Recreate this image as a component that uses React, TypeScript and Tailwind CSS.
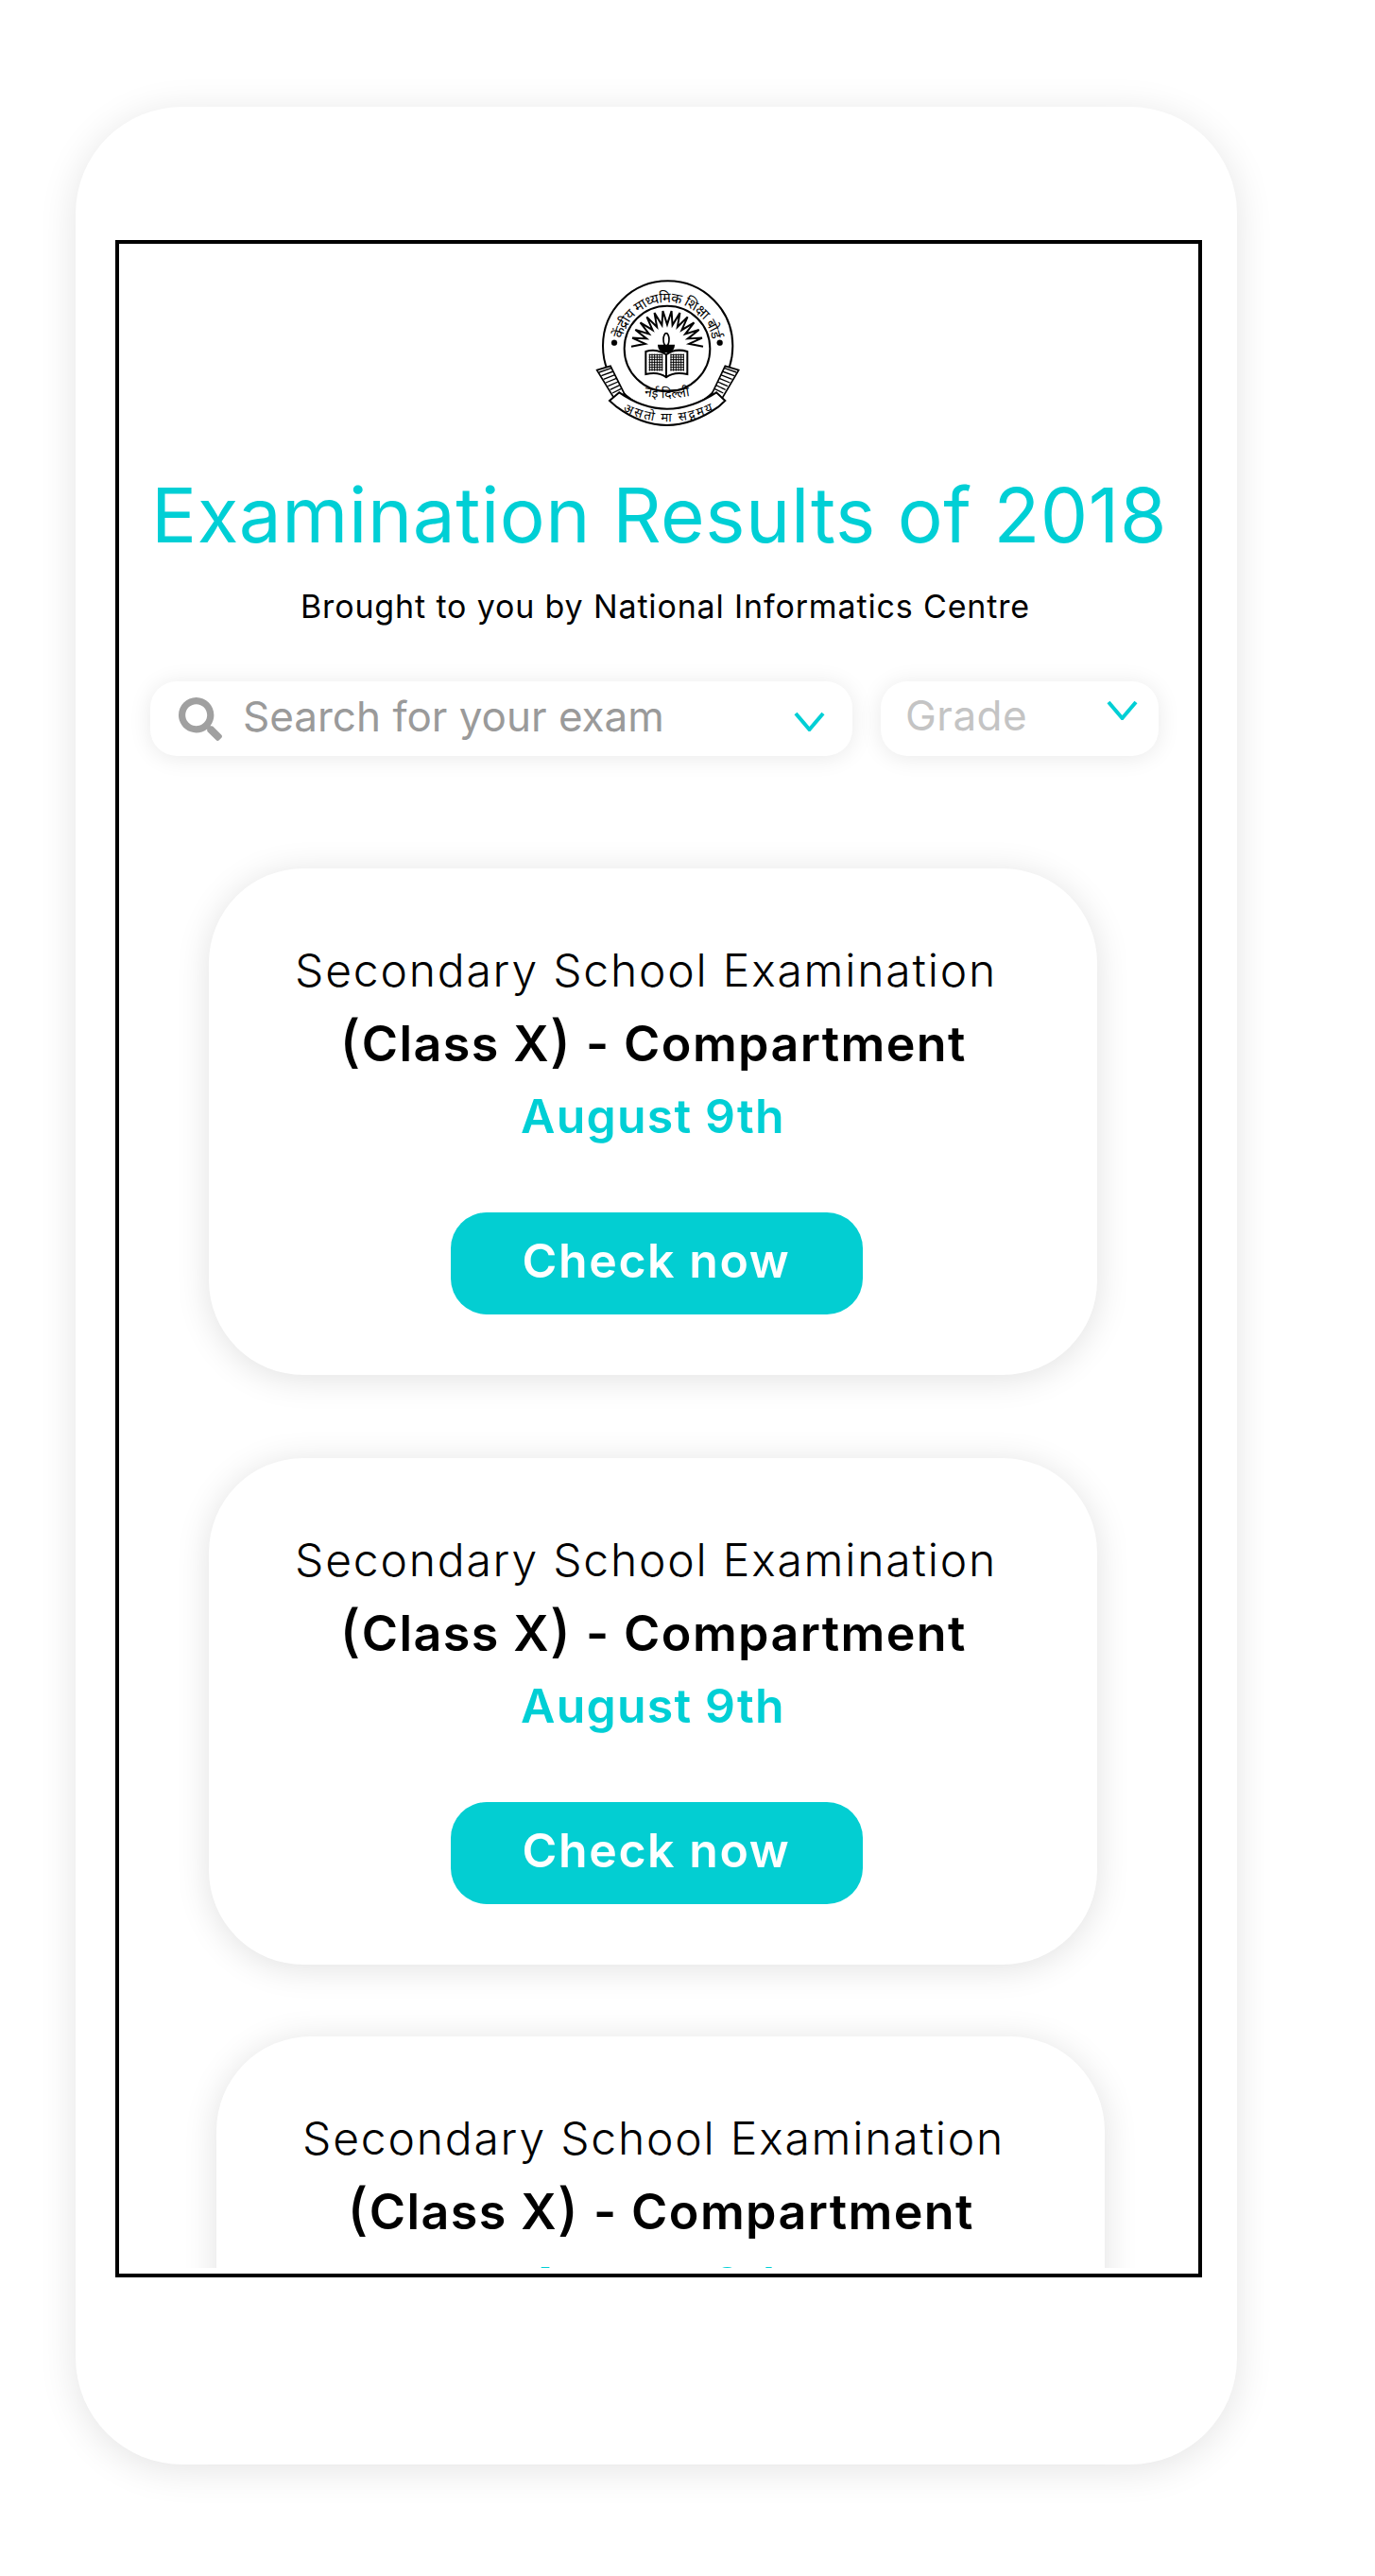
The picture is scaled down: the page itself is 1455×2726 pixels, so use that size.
import { FaSearch } from "react-icons/fa";

const font = { fontFamily: "Inter, 'Noto Sans', sans-serif" };

// sun rays behind the lamp, alternating long and short points
const rays = Array.from({ length: 27 }, (_, i) => {
  const a = Math.PI + (i / 26) * Math.PI;
  const r = i % 2 === 0 ? 114 : 70;
  return `${348 + Math.cos(a) * r},${290 + Math.sin(a) * r}`;
}).join(" ");

function Seal() {
  return (
    <svg viewBox="0 0 720 600" className="h-[200px] w-[240px]" fill="none" stroke="#000">
      <defs>
        <path id="seal-top" d="M202 296 A146 146 0 0 1 494 296" />
        <path id="seal-banner" d="M190 486 Q345 572 512 486" />
        <path id="seal-city" d="M250 440 Q345 468 445 440" />
      </defs>
      <circle cx="350" cy="288" r="206" strokeWidth="6" fill="#fff" />
      <circle cx="348" cy="297" r="136" strokeWidth="6" />
      <circle cx="180" cy="278" r="9" fill="#000" />
      <circle cx="515" cy="278" r="9" fill="#000" />
      <text fontSize="44" fill="#000" stroke="none" fontFamily="'Noto Sans', sans-serif">
        <textPath href="#seal-top" startOffset="50%" textAnchor="middle" textLength="400" lengthAdjust="spacing">
          केंद्रीय माध्यमिक शिक्षा बोर्ड
        </textPath>
      </text>
      <polyline points={rays} strokeWidth="6" />
      <ellipse cx="345" cy="268" rx="9" ry="20" strokeWidth="5" fill="#fff" />
      <path d="M318 284 H372 C372 304 356 310 345 310 C334 310 318 304 318 284Z" fill="#000" stroke="none" />
      <path d="M280 306 C305 298 330 304 345 316 C360 304 385 298 412 306 V378 C385 372 360 376 345 388 C330 376 305 372 280 378Z" strokeWidth="6" fill="#fff" />
      <path d="M345 316 V388" strokeWidth="6" />
      <g strokeWidth="3">
        {[0, 1, 2, 3, 4, 5].map((i) => (
          <path key={i} d={`M${292 + i * 8} 314 V368 M${360 + i * 8} 314 V368`} />
        ))}
        {[0, 1, 2, 3, 4, 5, 6].map((i) => (
          <path key={i} d={`M290 ${316 + i * 8} H334 M358 ${316 + i * 8} H402`} />
        ))}
      </g>
      <path d="M125 365 L168 352 L212 440 L180 455Z M575 365 L532 352 L490 440 L522 455Z" strokeWidth="5" fill="#fff" />
      <g strokeWidth="4">
        {[0, 1, 2, 3, 4, 5, 6].map((i) => (
          <path key={i} d={`M${132 + i * 7} ${372 + i * 11} L${172 + i * 5} ${358 + i * 11} M${568 - i * 7} ${372 + i * 11} L${528 - i * 5} ${358 + i * 11}`} />
        ))}
      </g>
      <path d="M165 462 L196 436 Q345 540 504 436 L532 462 L510 482 Q345 598 188 482Z" strokeWidth="6" fill="#fff" />
      <text fontSize="40" fill="#000" stroke="none" fontFamily="'Noto Sans', sans-serif">
        <textPath href="#seal-banner" startOffset="50%" textAnchor="middle" textLength="300" lengthAdjust="spacing">
          असतो मा सद्गमय
        </textPath>
      </text>
      <text fontSize="42" fill="#000" stroke="none" fontFamily="'Noto Sans', sans-serif">
        <textPath href="#seal-city" startOffset="50%" textAnchor="middle">नई दिल्ली</textPath>
      </text>
    </svg>
  );
}

function Chevron() {
  return (
    <svg viewBox="0 0 33 21" className="h-[21px] w-[33px]" fill="none" stroke="#00cfd5" strokeWidth="4">
      <path d="M2 2 L16.5 19 L31 2" />
    </svg>
  );
}

function ExamCard({ className }: { className: string }) {
  return (
    <div className={`flex h-[536px] w-[940px] flex-col items-center rounded-[100px] bg-white pt-[79px] shadow-[0_4px_36px_rgba(0,0,0,0.12)] ${className}`}>
      <p className="mr-[15px] text-[48px] leading-[58px] font-light tracking-[1.8px] whitespace-nowrap text-black">
        Secondary School Examination
      </p>
      <p className="mt-[15px] h-[60px] text-[52px] leading-[60px] font-semibold tracking-[1.4px] whitespace-nowrap text-black">
        <span className="text-[60px] leading-none font-medium">(</span>Class X
        <span className="text-[60px] leading-none font-medium">)</span> - Compartment
      </p>
      <p className="mt-[21px] text-[50px] leading-[58px] font-semibold tracking-[1.2px] whitespace-nowrap text-[#00cfd5]">
        August 9th
      </p>
      <button className="mt-[73px] ml-[7px] h-[108px] w-[436px] rounded-[38px] bg-[#03ced2] pb-[6px] text-[50px] font-semibold tracking-[1.6px] text-white">
        Check now
      </button>
    </div>
  );
}

export default function App() {
  return (
    <div className="h-[2726px] w-full bg-white pt-[113px] pl-[80px]" style={font}>
      <div className="h-[2495px] w-[1229px] rounded-[113px] bg-white pt-[141px] pl-[42px] shadow-[0_6px_40px_rgba(0,0,0,0.11)]">
        <div className="h-[2156px] w-[1150px] border-4 border-black">
          <div className="h-[2142px] overflow-hidden">
            <div className="mt-[12px] ml-[464px] w-[240px]">
              <Seal />
            </div>
            <h1 className="mt-[33px] ml-[34px] text-[80px] leading-[84px] font-normal tracking-[0.55px] whitespace-nowrap text-[#00cfd5]">
              Examination Results of 2018
            </h1>
            <p className="mt-[33px] ml-[192px] text-[34px] leading-[44px] tracking-[0.85px] whitespace-nowrap text-black">
              Brought to you by National Informatics Centre
            </p>
            <div className="mt-[57px] ml-[33px] flex gap-[30px]">
              <div className="flex h-[79px] w-[743px] items-center rounded-[28px] bg-white pr-[29px] pl-[30px] shadow-[0_2px_24px_rgba(0,0,0,0.09)]">
                <FaSearch className="text-[46px] text-[#a0a0a0]" />
                <span className="ml-[22px] flex-1 pb-[6px] text-[44px] leading-none text-[#9a9a9a]">Search for your exam</span>
                <div className="mt-[6px]">
                  <Chevron />
                </div>
              </div>
              <div className="flex h-[79px] w-[294px] items-start rounded-[28px] bg-white pr-[22px] pl-[26px] shadow-[0_2px_24px_rgba(0,0,0,0.09)]">
                <span className="mt-[14px] flex-1 text-[44px] leading-none tracking-[0.5px] text-[#c4c4c4]">Grade</span>
                <div className="mt-[20px]">
                  <Chevron />
                </div>
              </div>
            </div>
            <div className="mt-[119px] flex flex-col">
              <ExamCard className="ml-[95px]" />
              <ExamCard className="mt-[88px] ml-[95px]" />
              <ExamCard className="mt-[76px] ml-[103px]" />
            </div>
          </div>
        </div>
      </div>
    </div>
  );
}
